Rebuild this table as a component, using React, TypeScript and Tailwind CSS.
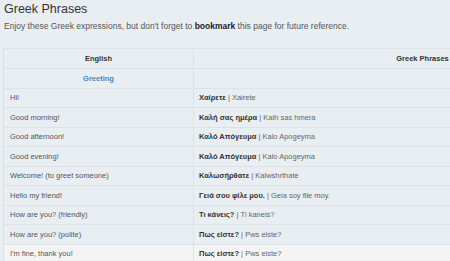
import React from 'react';

type Phrase = { en: string; gr: string; tr: string };

const PHRASES: Phrase[] = [
  { en: 'Hi!', gr: 'Χαίρετε', tr: 'Xairete' },
  { en: 'Good morning!', gr: 'Καλή σας ημέρα', tr: 'Kalh sas hmera' },
  { en: 'Good afternoon!', gr: 'Καλό Απόγευμα', tr: 'Kalo Apogeyma' },
  { en: 'Good evening!', gr: 'Καλό Απόγευμα', tr: 'Kalo Apogeyma' },
  { en: 'Welcome! (to greet someone)', gr: 'Καλωσήρθατε', tr: 'Kalwshrthate' },
  { en: 'Hello my friend!', gr: 'Γειά σου φίλε μου.', tr: 'Geia soy file moy.' },
  { en: 'How are you? (friendly)', gr: 'Τι κάνεις?', tr: 'Ti kaneis?' },
  { en: 'How are you? (polite)', gr: 'Πως είστε?', tr: 'Pws eiste?' },
  { en: "I'm fine, thank you!", gr: 'Πως είστε?', tr: 'Pws eiste?' },
];

const App: React.FC = () => {
  return (
    <div className="w-[450px] h-[261px] overflow-hidden bg-[#e9eef3] font-['Liberation_Sans',Arial,sans-serif] text-[#333]">
      <div className="pl-[4px] pt-[1px]">
        <h1 className="text-[12.5px] leading-[16px] font-normal text-[#333]">Greek Phrases</h1>
        <p className="mt-[4px] text-[8.5px] leading-[11px] text-[#555]">
          Enjoy these Greek expressions, but don't forget to <b className="text-[#222]">bookmark</b> this page for future reference.
        </p>
      </div>

      <table className="mt-[16px] ml-[3px] w-[648px] table-fixed border-collapse text-[7.5px]">
        <colgroup>
          <col className="w-[190px]" />
          <col className="w-[458px]" />
        </colgroup>
        <thead>
          <tr className="h-[20px]">
            <th className="border border-[#dde2e7] text-center font-bold text-[#333]">English</th>
            <th className="border border-[#dde2e7] text-center font-bold text-[#333]">Greek Phrases</th>
          </tr>
        </thead>
        <tbody>
          <tr className="h-[19.5px]">
            <td className="border border-[#dde2e7] text-center font-bold text-[#4a86c0]">Greeting</td>
            <td className="border border-[#dde2e7]"></td>
          </tr>
          {PHRASES.map((p, i) => (
            <tr key={i} className={`h-[19.5px] ${i === PHRASES.length - 1 ? 'bg-[#f4f4f4]' : ''}`}>
              <td className="border border-[#dde2e7] pl-[6px] text-[#555]">{p.en}</td>
              <td className="border border-[#dde2e7] pl-[5px] text-[#666]">
                <b className="text-[#333]">{p.gr}</b> | {p.tr}
              </td>
            </tr>
          ))}
        </tbody>
      </table>
    </div>
  );
};

export default App;
